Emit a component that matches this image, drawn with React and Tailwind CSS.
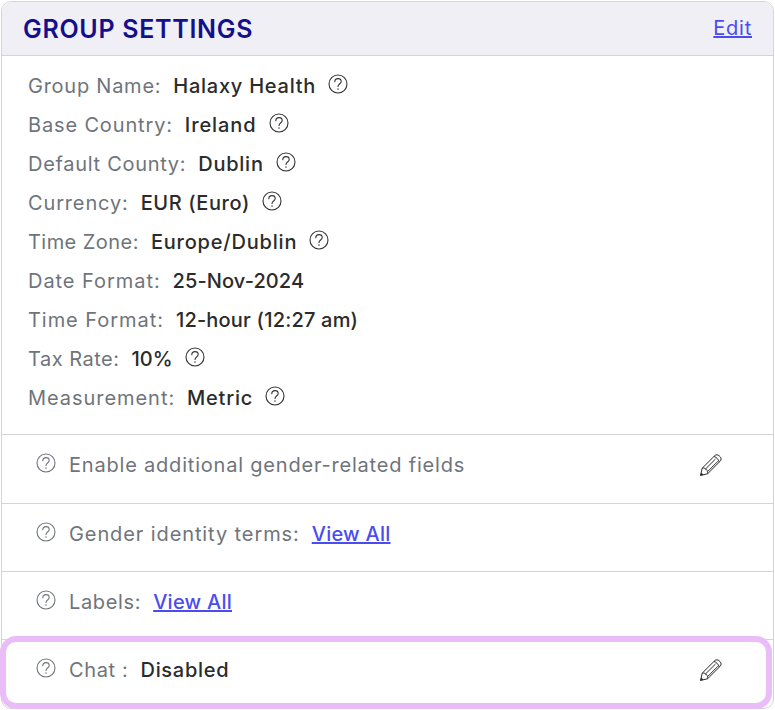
import React from 'react';

const font = { fontFamily: 'Inter, "Noto Sans", sans-serif' };

function HelpIcon({ className = 'text-[#333]' }) {
  return (
    <svg width="20" height="20" viewBox="0 0 20 20" fill="none" stroke="currentColor" strokeWidth="1.1" strokeLinecap="round" className={`shrink-0 ${className}`}>
      <circle cx="10" cy="10" r="9" />
      <path d="M6.800 7.800c0-2 1.500-3.200 3.200-3.200s3.200 1.100 3.200 2.900c0 2.500-3.200 2.500-3.200 5" />
      <path d="M10 14.800v.4" strokeWidth="1.300" />
    </svg>
  );
}

function Pencil() {
  return (
    <svg width="26" height="26" viewBox="0 0 26 26" fill="none" stroke="#2b2b2b" strokeWidth="1" strokeLinejoin="round" className="shrink-0">
      <path d="M2.500 23.500l1.700-7.300L16.600 3.800c1.300-1.300 3.300-1.300 4.600 0l.9.900c1.300 1.300 1.300 3.300 0 4.600L9.700 21.700z" />
      <path d="M4.200 16.200c1.600-.5 2.700-.2 3.100 1 1.300-.2 2.200.8 2.400 4.500" />
      <path d="M7.300 17.200L17.500 7M9.700 19.500L20 9.200M16 4.500c2 .3 4.600 2.900 5.200 5.300" />
      <path d="M2.500 23.500l.7-3 2.300 2.300z" fill="#2b2b2b" stroke="none" />
    </svg>
  );
}

const settings = [
  ['Group Name:', 'Halaxy Health', true, 'tracking-[0.75px]', 'tracking-[0.75px]'],
  ['Base Country:', 'Ireland', true, 'tracking-[0.85px]', 'tracking-[0.9px]'],
  ['Default County:', 'Dublin', true, 'tracking-[0.7px]', 'tracking-[0.75px]'],
  ['Currency:', 'EUR (Euro)', true, 'tracking-[0.85px]', 'tracking-[0.6px]'],
  ['Time Zone:', 'Europe/Dublin', true, 'tracking-[0.45px]', 'tracking-[0.8px]'],
  ['Date Format:', '25-Nov-2024', false, 'tracking-[0.95px]', 'tracking-[0.1px]'],
  ['Time Format:', '12-hour (12:27 am)', false, 'tracking-[0.95px]', 'tracking-[0.2px]'],
  ['Tax Rate:', '10%', true, 'tracking-[0.5px]', 'tracking-[0px]'],
  ['Measurement:', 'Metric', true, 'tracking-[0.95px]', 'tracking-[0.75px]'],
];

function Row({ children, action, height }) {
  return (
    <div className={`flex items-center justify-between border-t border-[#d4d4d6] pb-[8px] pl-[34px] pr-[49px] ${height}`}>
      <div className="flex items-center gap-[13px] text-[20px] tracking-[0.8px] text-[#6f747b]">
        <span className="mb-[4px]"><HelpIcon className="text-[#6f747b]" /></span>
        <div className="flex items-center gap-[12px]">{children}</div>
      </div>
      {action}
    </div>
  );
}

export default function App() {
  return (
    <div className="w-[775px] h-[710px] bg-white pt-px pl-px" style={font}>
      <div className="relative w-[773px] h-[708px] rounded-[10px] border border-[#d4d4d6]">
        <div className="flex h-[54px] items-center justify-between rounded-t-[10px] border-b border-[#d4d4d6] bg-[#f0eff5] px-[21px]">
          <h2 className="pt-[3px] text-[25px] font-semibold tracking-[0.7px] text-[#14108c]">GROUP SETTINGS</h2>
          <a href="#" className="pb-[1px] text-[20px] tracking-[0.75px] text-[#4a4cf0] underline">Edit</a>
        </div>
        <div className="flex h-[378px] flex-col pl-[26px] pt-[10px]">
          {settings.map(([label, value, help, labelTrack, valueTrack]) => (
            <div key={label} className="flex h-[39px] items-center text-[20px]">
              <span className={`text-[#6f747b] ${labelTrack}`}>{label}</span>
              <span className={`ml-[12px] font-medium text-[#2b2b2b] ${valueTrack}`}>{value}</span>
              {help ? <span className="ml-[12px] -mt-[4px]"><HelpIcon /></span> : null}
            </div>
          ))}
        </div>
        <Row height="h-[69px]" action={<Pencil />}>
          <span>Enable additional gender-related fields</span>
        </Row>
        <Row height="h-[68px]">
          <span className="tracking-[0.9px]">Gender identity terms:</span>
          <a href="#" className="font-medium tracking-[0.25px] text-[#4a4cf0] underline">View All</a>
        </Row>
        <Row height="h-[68px]">
          <span className="tracking-[0.65px]">Labels:</span>
          <a href="#" className="font-medium tracking-[0.25px] text-[#4a4cf0] underline">View All</a>
        </Row>
        <Row height="h-[69px]" action={<Pencil />}>
          <span className="tracking-[0.65px]">Chat :</span>
          <span className="font-medium tracking-[0.7px] text-[#2b2b2b]">Disabled</span>
        </Row>
        <div className="absolute left-[-2px] top-[634px] h-[73px] w-[772px] rounded-[16px] border-[6px] border-[#ebbdf8]" />
      </div>
    </div>
  );
}
